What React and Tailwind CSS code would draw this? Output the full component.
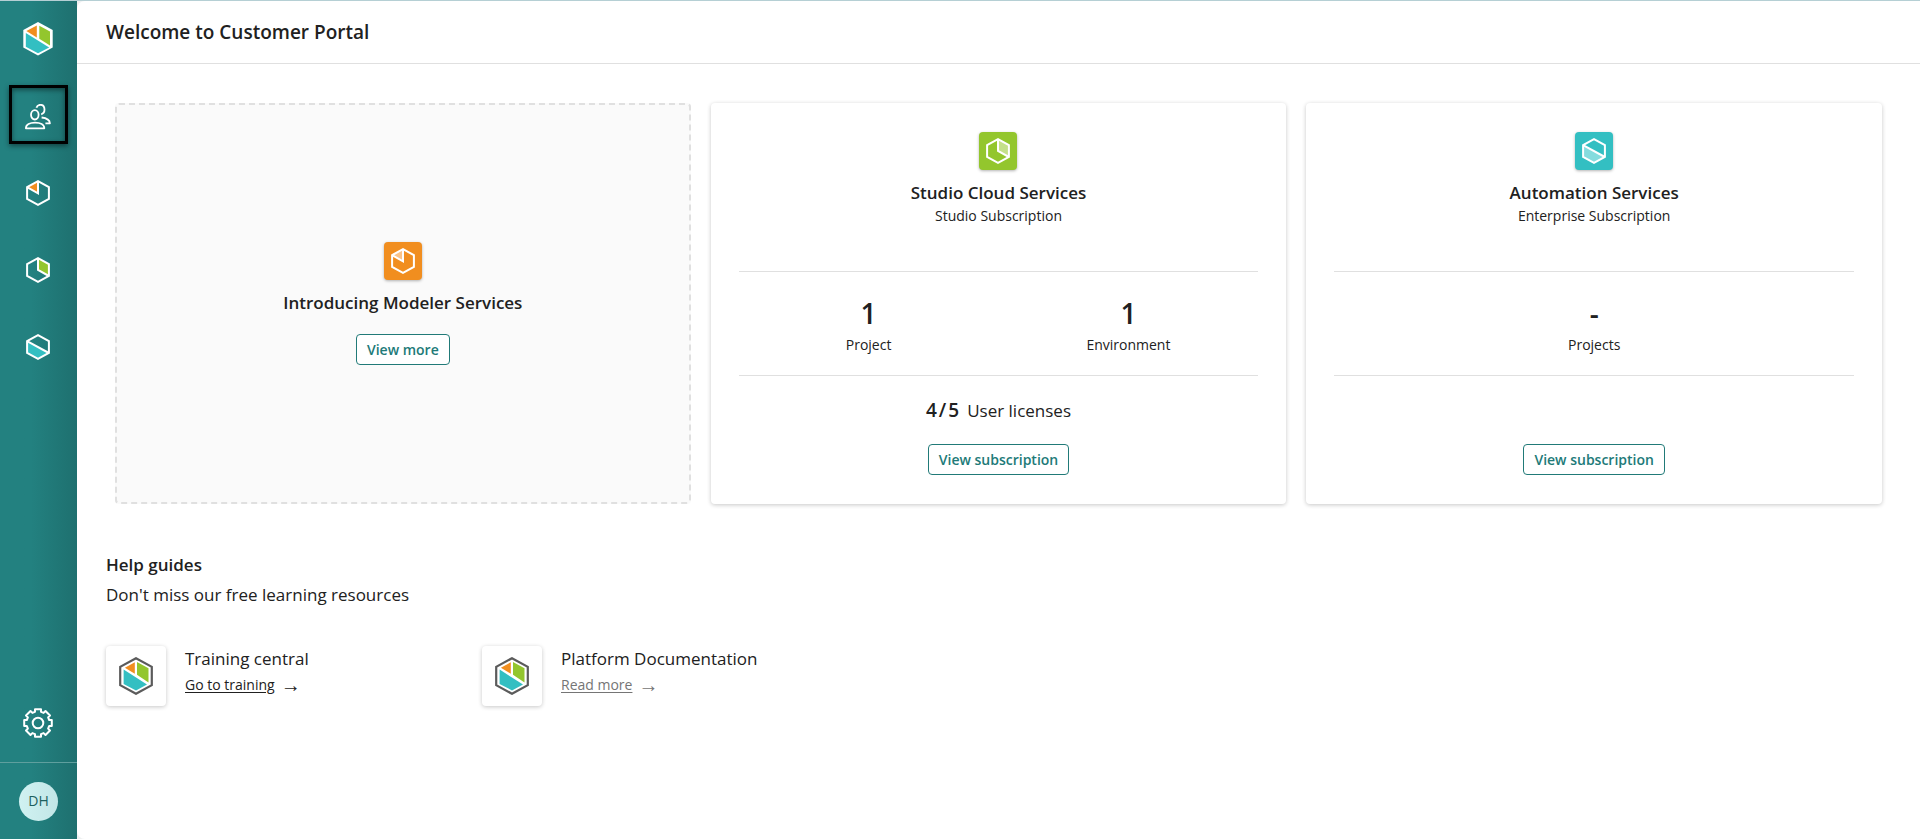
import React from 'react';

const SmallHex = ({ kind, accent }) => (
  <svg width="24" height="26" viewBox="0 0 24 26" fill="none" aria-hidden="true">
    {kind === 'modeler' && <path d="M1.5 7 12 1v13z" fill={accent} />}
    {kind === 'studio' && <path d="M12 1l11 6v12.5L12 13z" fill={accent} />}
    {kind === 'automation' && <path d="M1 7l22 12-11 6-11-6z" fill={accent} />}
    <g stroke="#fff" strokeWidth="2">
      <path d="M12 1.2 22.9 7.2v11.6L12 24.8 1.1 18.8V7.2z" />
      {kind === 'modeler' && <path d="M1.5 7.4 12 13.4V1.2" />}
      {kind === 'studio' && <path d="M12 1.2V13l10.9 6" />}
      {kind === 'automation' && <path d="M1.1 7.2l21.8 11.8" />}
    </g>
  </svg>
);

const PortalLogo = () => (
  <svg width="30" height="34" viewBox="0 0 30 34" aria-hidden="true">
    <path d="M15 0l14.7 8v17.6L15 33.6.3 25.6V8z" fill="#fff" />
    <path d="M3.4 9.1 13.8 3.6v11.8z" fill="#f18e1f" />
    <path d="M16.3 3.8 27 9.4v14.2l-10.7-6.8z" fill="#93c62d" />
    <path d="M2.8 11 26.2 25.4 15 31.2 2.8 24.8z" fill="#33bfc2" />
  </svg>
);

const OutlinedLogo = () => (
  <svg width="34" height="38" viewBox="0 0 34 38" aria-hidden="true">
    <path d="M17 1.2 32.8 9.8v18.4L17 36.8 1.2 28.2V9.8z" fill="#fff" stroke="#5b5b5b" strokeWidth="2.2" />
    <path d="M5.9 10.8 15.8 5.2v11.6z" fill="#f18e1f" />
    <path d="M18 5l11.5 6.2v14.4L18 17.8z" fill="#93c62d" />
    <path d="M4.6 12.6 28 27.4 17 33.4 4.6 27z" fill="#33bfc2" />
  </svg>
);

const PeopleIcon = () => (
  <svg width="26" height="26" viewBox="0 0 26 26" fill="none" stroke="#fff" strokeWidth="1.8" strokeLinejoin="round" aria-hidden="true">
    <ellipse cx="9.8" cy="10.8" rx="3.8" ry="4.7" />
    <path d="M.9 24.3h18.4c0-3.6-4-5.6-9.2-5.6S.9 20.7.9 24.3z" />
    <path d="M11.4 3.8c.6-1.9 2.1-3 4-3 2.6 0 4.1 2.2 4.1 4.8 0 2.3-1.2 4.2-3.3 4.7" />
    <path d="M16.6 13.5c4.4.5 8.1 2.7 8.3 5.8h-4.5" />
  </svg>
);

const GearIcon = () => (
  <svg width="30" height="30" viewBox="0 0 30 30" fill="none" stroke="#fff" strokeWidth="2" strokeLinejoin="round" aria-hidden="true">
    <circle cx="15" cy="15" r="5.3" />
    <path d="M12 1.2h6v2.6l2.6 1.1L22.5 3 27 7.5l-1.9 1.9 1.1 2.6h2.6v6h-2.6l-1.1 2.6 1.9 1.9-4.5 4.5-1.9-1.9-2.6 1.1v2.6h-6v-2.6l-2.6-1.1L7.5 27 3 22.5l1.9-1.9L3.8 18H1.2v-6h2.6l1.1-2.6L3 7.5 7.5 3l1.9 1.9L12 3.8z" />
  </svg>
);

const services = [
  { kind: 'modeler', label: 'Modeler Services', accent: '#f18e1f' },
  { kind: 'studio', label: 'Studio Cloud Services', accent: '#93c62d' },
  { kind: 'automation', label: 'Automation Services', accent: '#33bfc2' },
];

const subscriptions = [
  {
    kind: 'studio',
    title: 'Studio Cloud Services',
    plan: 'Studio Subscription',
    tile: 'bg-[#93c62d]',
    accent: '#c4e08a',
    stats: [
      { value: '1', label: 'Project' },
      { value: '1', label: 'Environment' },
    ],
    licenses: { used: 4, total: 5 },
  },
  {
    kind: 'automation',
    title: 'Automation Services',
    plan: 'Enterprise Subscription',
    tile: 'bg-[#33bfc2]',
    accent: '#85dcde',
    stats: [{ value: '-', label: 'Projects' }],
    licenses: null,
  },
];

const guides = [
  { title: 'Training central', link: 'Go to training', color: 'text-[#212121]' },
  { title: 'Platform Documentation', link: 'Read more', color: 'text-[#757575]' },
];

const ServiceTile = ({ kind, accent, tile }) => (
  <div className={`flex size-[38px] items-center justify-center rounded shadow-[0_1px_3px_rgba(0,0,0,0.3)] ${tile}`}>
    <SmallHex kind={kind} accent={accent} />
  </div>
);

const OutlineButton = ({ children }) => (
  <button className="h-[31px] rounded border border-[#217a78] bg-white px-2.5 text-sm font-semibold text-[#217a78]">
    {children}
  </button>
);

const Sidebar = () => (
  <aside className="flex w-[77px] shrink-0 flex-col bg-linear-to-r from-[#238180] from-40% to-[#1e706f]">
    <div className="flex flex-1 flex-col items-center pr-px">
      <a href="#home" aria-label="Home" className="mt-[21px]">
        <PortalLogo />
      </a>
      <nav className="mt-[29px] flex flex-col items-center gap-[17px]">
        <a
          href="#users"
          aria-label="Users"
          className="flex size-[59px] items-center justify-center border-[3px] border-black pt-1 shadow-[0_2px_5px_rgba(0,0,0,0.45),inset_0_2px_5px_rgba(0,0,0,0.45)]"
        >
          <PeopleIcon />
        </a>
        {services.map((item) => (
          <a key={item.kind} href={`#${item.kind}`} aria-label={item.label} className="flex size-[60px] items-center justify-center pt-1">
            <SmallHex kind={item.kind} accent={item.accent} />
          </a>
        ))}
      </nav>
      <button aria-label="Settings" className="mt-auto mb-6">
        <GearIcon />
      </button>
    </div>
    <div className="flex h-[77px] items-center justify-center border-t border-[#5f9f9e]">
      <button className="size-[39px] rounded-full bg-linear-to-r from-[#d0f2f2] to-[#c2e6e6] text-sm text-[#1d5f5e]">DH</button>
    </div>
  </aside>
);

const SubscriptionCard = ({ item }) => (
  <section className="flex h-[401px] flex-col items-center rounded bg-white px-7 py-[29px] shadow-[0_1px_4px_rgba(0,0,0,0.22)]">
    <ServiceTile kind={item.kind} accent={item.accent} tile={item.tile} />
    <h2 className="mt-[11px] text-[17px] leading-6 font-semibold">{item.title}</h2>
    <p className="text-sm leading-[22px]">{item.plan}</p>
    <div className="mt-11 flex h-[105px] w-full border-y border-[#e0e0e0] pt-[23px]">
      {item.stats.map((stat) => (
        <div key={stat.label} className="flex-1 text-center">
          <div className="text-[28px] leading-9 font-semibold">{stat.value}</div>
          <div className="mt-1 text-sm leading-5">{stat.label}</div>
        </div>
      ))}
    </div>
    {item.licenses && (
      <p className="mt-5 flex items-baseline gap-2 text-[17px] leading-7">
        <span className="flex gap-0.5 text-[19px] leading-7 font-semibold">
          <span>{item.licenses.used}</span>
          <span>/</span>
          <span>{item.licenses.total}</span>
        </span>
        User licenses
      </p>
    )}
    <div className="mt-auto">
      <OutlineButton>View subscription</OutlineButton>
    </div>
  </section>
);

const App = () => {
  return (
    <div className="flex min-h-screen flex-col border-t border-[#b5cfd4] bg-[#eef0f1] font-['Open_Sans','Noto_Sans',sans-serif] text-[#212121]">
      <div className="flex flex-1">
        <Sidebar />
        <main className="min-w-0 flex-1 rounded-l-lg bg-white">
          <header className="flex h-[63px] items-center border-b border-[#e0e0e0] px-[29px]">
            <h1 className="text-[19px] font-semibold">Welcome to Customer Portal</h1>
          </header>

          <div className="px-[29px] pt-[39px]">
            <div className="grid grid-cols-3 gap-5 px-[9px]">
              <section className="flex h-[401px] flex-col items-center justify-center rounded border-2 border-dashed border-[#e0e0e0] bg-[#fafafa]">
                <ServiceTile kind="modeler" accent="#fac48a" tile="bg-[#f18e1f]" />
                <h2 className="mt-[11px] mb-[19px] text-[17px] leading-6 font-semibold">Introducing Modeler Services</h2>
                <OutlineButton>View more</OutlineButton>
              </section>
              {subscriptions.map((item) => (
                <SubscriptionCard key={item.kind} item={item} />
              ))}
            </div>

            <h2 className="mt-[49px] text-[17px] leading-6 font-semibold">Help guides</h2>
            <p className="mt-1.5 text-[17px] leading-6">Don't miss our free learning resources</p>

            <div className="mt-[39px] flex">
              {guides.map((guide) => (
                <div key={guide.title} className="flex w-[376px] gap-[19px]">
                  <div className="flex size-[60px] items-center justify-center rounded bg-white shadow-[0_1px_4px_rgba(0,0,0,0.22)]">
                    <OutlinedLogo />
                  </div>
                  <div>
                    <h3 className="text-[17px] leading-[26px]">{guide.title}</h3>
                    <p className={`flex gap-1.5 text-sm leading-[26px] ${guide.color}`}>
                      <a href="#guide" className="underline underline-offset-2">{guide.link}</a>
                      <span className="text-xl leading-[26px] font-light">→</span>
                    </p>
                  </div>
                </div>
              ))}
            </div>
          </div>
        </main>
      </div>
    </div>
  );
};

export default App;
